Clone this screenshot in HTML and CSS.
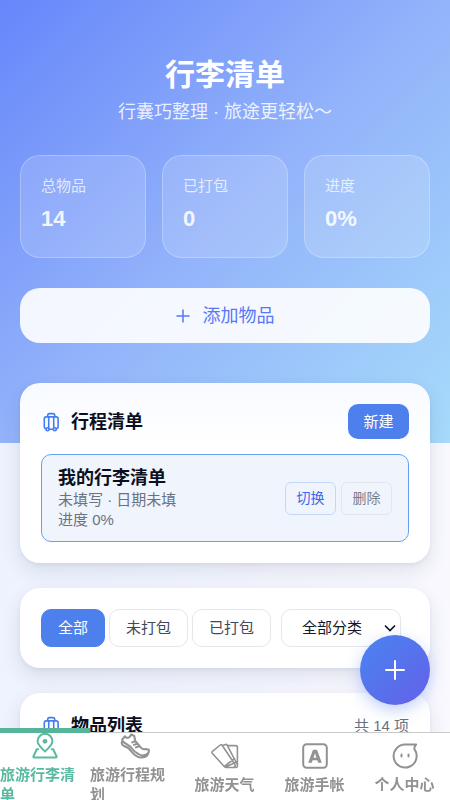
FILE: index.html
```html
<!DOCTYPE html>
<html lang="zh-CN">
<head>
<meta charset="utf-8">
<meta name="viewport" content="width=device-width, initial-scale=1">
<title>行李清单</title>
<link rel="stylesheet" href="styles.css">
</head>
<body>
<svg class="sprite" aria-hidden="true">
  <symbol id="luggage" viewBox="0 0 20 20">
    <g fill="none" stroke="currentColor" stroke-width="1.600" stroke-linecap="round" stroke-linejoin="round">
      <path d="M5 16.800a2 2 0 0 1-1.700-2V6.900a2 2 0 0 1 2-2h9.800a2 2 0 0 1 2 2v7.900a2 2 0 0 1-1.700 2M8.300 17.300h3.800M7.700 15.800V4.900M12.700 15.800V4.900M6.700 4.900V3.300a1.700 1.700 0 0 1 1.700-1.700h3.600a1.700 1.700 0 0 1 1.700 1.700v1.600"/>
      <circle cx="6.600" cy="17.300" r="1.500"/><circle cx="13.800" cy="17.300" r="1.500"/>
    </g>
  </symbol>
</svg>
<header class="hero">
  <h1>行李清单</h1>
  <p class="subtitle">行囊巧整理 · 旅途更轻松～</p>
  <dl class="stats">
    <div class="stat"><dt>总物品</dt><dd>14</dd></div>
    <div class="stat"><dt>已打包</dt><dd>0</dd></div>
    <div class="stat"><dt>进度</dt><dd>0%</dd></div>
  </dl>
  <button class="add" type="button">
    <svg width="14" height="14" viewBox="0 0 14 14" aria-hidden="true"><path d="M7 1v12M1 7h12" stroke="currentColor" stroke-width="1.500" stroke-linecap="round"/></svg>
    添加物品
  </button>
</header>
<main>
  <section class="card trips">
    <div class="card-head">
      <h2><svg class="luggage" aria-hidden="true"><use href="#luggage"/></svg>行程清单</h2>
      <button class="new" type="button">新建</button>
    </div>
    <article class="trip">
      <div>
        <h3>我的行李清单</h3>
        <p>未填写 · 日期未填</p>
        <p>进度 0%</p>
      </div>
      <div class="trip-actions">
        <button class="switch" type="button">切换</button>
        <button type="button">删除</button>
      </div>
    </article>
  </section>
  <section class="card filters">
    <button class="active" type="button">全部</button>
    <button type="button">未打包</button>
    <button type="button">已打包</button>
    <div class="category">
      <select aria-label="分类"><option>全部分类</option></select>
      <svg width="12" height="8" viewBox="0 0 12 8" aria-hidden="true"><path d="M1 1.500l5 5 5-5" fill="none" stroke="currentColor" stroke-width="1.600"/></svg>
    </div>
  </section>
  <section class="card items">
    <div class="card-head">
      <h2><svg class="luggage" aria-hidden="true"><use href="#luggage"/></svg>物品列表</h2>
      <span class="count">共 14 项</span>
    </div>
  </section>
</main>
<button class="fab" type="button" aria-label="添加物品">
  <svg width="22" height="22" viewBox="0 0 22 22" aria-hidden="true"><path d="M11 2v18M2 11h18" stroke="currentColor" stroke-width="2" stroke-linecap="round"/></svg>
</button>
<nav class="tabs">
  <a class="current" href="#list" aria-current="page">
    <svg viewBox="0 0 26 26" aria-hidden="true"><path d="M13 18.500C8.500 14 5.600 11.800 5.600 8.200a7.400 7.400 0 0 1 14.800 0c0 3.600-2.900 5.800-7.400 10.300z"/><circle class="dot" cx="13" cy="8.300" r="2.400"/><path d="M6.200 16.200H4.800L1.500 23.200q-.5 1.300.8 1.300h21.400q1.300 0 .8-1.300l-3.300-7h-1.400"/></svg>
    <span>旅游行李清单</span>
  </a>
  <a href="#plan">
    <svg class="wide" viewBox="0 0 30 26" aria-hidden="true"><path d="M2.300 6.500L5 3.200q1 2.500 4 1.200 1.800-1 2-3L14.300 3l.9 4.800 6 7q1.500 1.800 4.300 1.200l3.300.8q.6 2.700-2.400 4.700-3.800 2-8-.5-4-2-6.500-5.500C9.500 12 6 11.500 3.500 9q-1.500-1.500-1.200-2.500zM2 8.500q-1 2.500 1.500 4.300c4 1.200 6 3 8.300 6 4 5 9 6.500 13.500 5q2.500-1 3.500-5M12.200 9.400l3-1.200M14 11.900l3-1.200M16 14.400l3-1.200"/></svg>
    <span>旅游行程规划</span>
  </a>
  <a href="#weather">
    <svg class="wide cards" viewBox="0 0 30 26" aria-hidden="true"><path d="M14.700 24L2.200 10.200q-.8-1 .2-1.800L10.300 2q1-.8 1.800.2L25 21.500q.7 1.500-.8 2.700M12.600 2.600l3-1.200q1.200-.3 1.700 1L27 21M17.600 2.600h8.300q1.500 0 1.500 1.500v18.900q0 1.500-1.500 1.500H16q-1.500 0-1-1.500l9.500-7.500M15.500 24l11-5"/></svg>
    <span>旅游天气</span>
  </a>
  <a href="#journal">
    <svg viewBox="0 0 26 26" aria-hidden="true"><rect x="1.200" y="1.200" width="23.600" height="23.600" rx="3.500"/><path class="solid" fill-rule="evenodd" d="M6.200 19.800L11 6.800h4l4.800 13h-3.600l-.8-2.500h-4.800l-.8 2.500zM11.500 14.800h3L13 10.200z"/></svg>
    <span>旅游手帐</span>
  </a>
  <a href="#me">
    <svg viewBox="0 0 26 26" aria-hidden="true"><path d="M13 1.500h11.200q-2.200 2-1.800 4.700A11.500 11.500 0 1 1 13 1.500z"/><path d="M9.500 11.500v2M16.500 11.500v2"/></svg>
    <span>个人中心</span>
  </a>
</nav>
</body>
</html>
```
FILE: styles.css
```css
* { box-sizing: border-box; }

body {
  margin: 0;
  min-height: 100vh;
  padding-bottom: 67px;
  background: linear-gradient(100deg, #ebf1fe, #faf9fe);
  color: #0b1020;
  font-family: "Liberation Sans", "Noto Sans CJK SC", sans-serif;
  font-size: 15px;
  line-height: 20px;
}

h1, h2, h3, p, dl, dd { margin: 0; }
h1, h2, h3 { font-weight: 700; }
button, select { font: inherit; color: inherit; cursor: pointer; }
.sprite { position: absolute; width: 0; height: 0; }

.hero {
  padding: 56px 20px 100px;
  background: linear-gradient(135deg, #6686fb 0%, #93b3fa 50%, #a6dbfb 100%);
  color: #fff;
}
.hero h1 { font-size: 30px; line-height: 38px; text-align: center; }
.subtitle { margin-top: 6px; font-size: 18px; line-height: 24px; text-align: center; color: rgba(255, 255, 255, .85); }

.stats { display: grid; grid-template-columns: repeat(3, 1fr); gap: 16px; margin-top: 31px; }
.stat {
  padding: 20px 20px 24px;
  border: 1px solid rgba(255, 255, 255, .25);
  border-radius: 20px;
  background: rgba(255, 255, 255, .15);
}
.stat dt { color: rgba(255, 255, 255, .75); }
.stat dd { margin-top: 9px; font-size: 22px; line-height: 28px; font-weight: 700; color: rgba(255, 255, 255, .9); }

.add {
  display: flex;
  align-items: center;
  justify-content: center;
  gap: 13px;
  width: 100%;
  height: 55px;
  margin-top: 30px;
  border: 0;
  border-radius: 20px;
  background: rgba(255, 255, 255, .9);
  color: #5677f6;
  font-size: 18px;
}

main { display: grid; gap: 25px; margin-top: -60px; padding: 0 20px 20px; }
.card {
  padding: 21px;
  border-radius: 20px;
  background: #fff;
  box-shadow: 0 8px 20px rgba(30, 41, 80, .11), 0 2px 4px rgba(30, 41, 80, .06);
}
.trips { background: linear-gradient(#f7faff, #fff 35%); }
.card-head { display: flex; align-items: center; justify-content: space-between; }
.card h2 { display: flex; align-items: center; gap: 10px; font-size: 18px; line-height: 24px; }
.luggage { width: 20px; height: 20px; color: #437cf0; }
.new {
  width: 61px;
  height: 35px;
  padding: 0;
  border: 0;
  border-radius: 10px;
  background: #4d80ec;
  color: #fff;
}

.trip {
  display: flex;
  align-items: center;
  justify-content: space-between;
  margin-top: 15px;
  padding: 11px 16px;
  border: 1px solid #66a0f5;
  border-radius: 10px;
  background: #f0f4fd;
}
.trip h3 { font-size: 18px; line-height: 24px; }
.trip p { color: #6b7280; line-height: 20px; }
.trip-actions { display: flex; gap: 5px; }
.trip-actions button {
  width: 51px;
  height: 33px;
  padding: 0;
  border: 1px solid #e4e6ec;
  border-radius: 6px;
  background: transparent;
  color: #7a7f89;
  font-size: 14px;
}
.trip-actions .switch { border-color: #c1d8fc; color: #3e68ea; }

.filters { display: flex; gap: 4px; }
.filters button, .filters select {
  height: 38px;
  padding: 0 16px;
  border: 1px solid #e4e7eb;
  border-radius: 10px;
  background: #fff;
  color: #414957;
}
.filters .active { border-color: #4d80ec; background: #4d80ec; color: #fff; }
.category { position: relative; margin-left: 6px; }
.filters select { width: 120px; padding: 0 20px; appearance: none; color: #111827; }
.category svg { position: absolute; right: 5px; top: 15px; pointer-events: none; }
.count { color: #6b7280; }

.fab {
  position: fixed;
  right: 20px;
  bottom: 95px;
  display: grid;
  place-items: center;
  width: 70px;
  height: 70px;
  padding: 0;
  border: 0;
  border-radius: 50%;
  background: linear-gradient(135deg, #4a84f1, #6360e8);
  color: #fff;
  box-shadow: 0 5px 15px rgba(80, 120, 240, .35);
}

.tabs {
  position: fixed;
  inset: auto 0 0;
  display: grid;
  grid-template-columns: repeat(5, 1fr);
  height: 67px;
  background: #fff;
  box-shadow: 0 -1px #c8c8c8;
}
.tabs a {
  display: flex;
  flex-direction: column;
  align-items: center;
  justify-content: center;
  gap: 6px;
  min-width: 0;
  height: 67px;
  padding-top: 4px;
  color: #929292;
  font-weight: 700;
  text-decoration: none;
}
.tabs span { padding-right: 1px; }
.tabs .current { color: #5abaa1; box-shadow: 0 -5px #56b49d; }
.tabs svg {
  flex: none;
  width: 26px;
  height: 26px;
  fill: none;
  stroke: currentColor;
  stroke-width: 2;
  stroke-linecap: round;
  stroke-linejoin: round;
}
.tabs .wide { width: 30px; }
.tabs .cards { stroke-width: 1.600; }
.tabs .dot, .tabs .solid { fill: currentColor; stroke: none; }
```
